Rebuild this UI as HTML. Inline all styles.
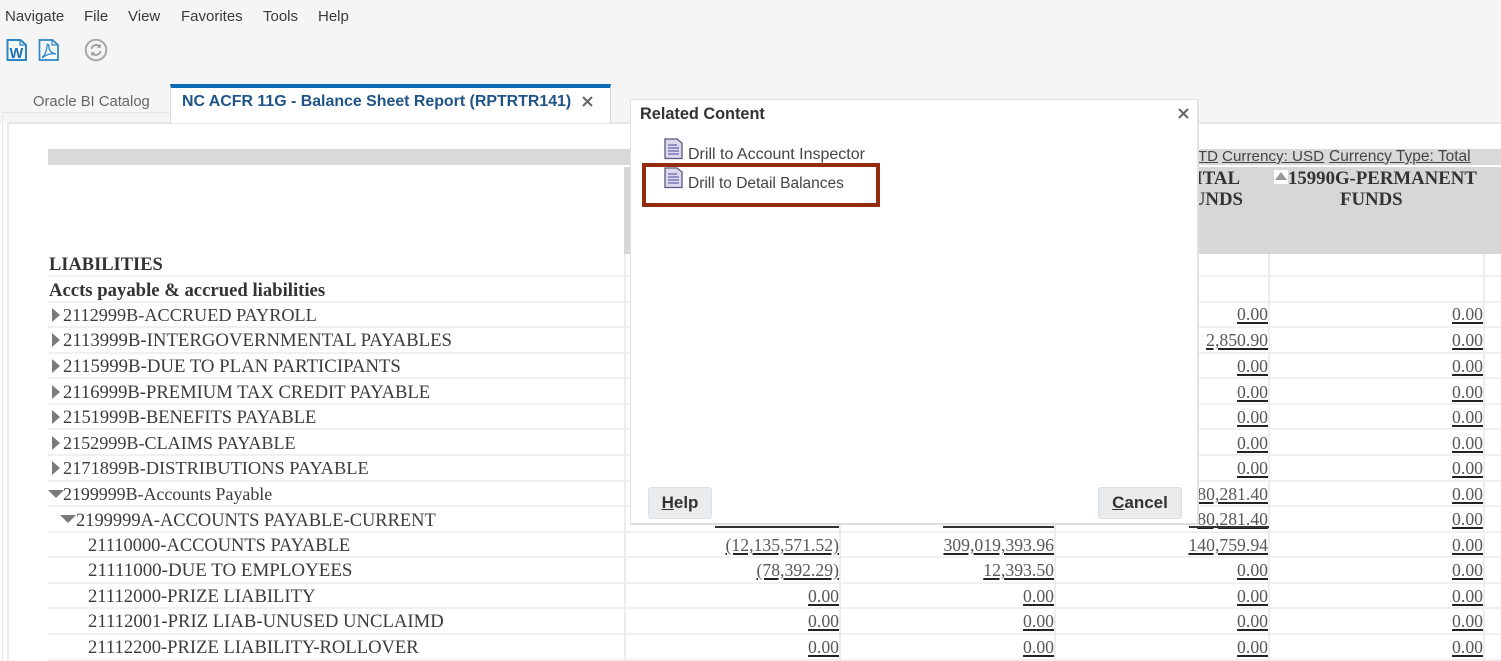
<!DOCTYPE html>
<html><head><meta charset="utf-8"><style>
html,body{margin:0;padding:0}
body{width:1501px;height:661px;position:relative;overflow:hidden;background:#f5f5f5;font-family:"Liberation Sans",sans-serif;color:#333}
div,svg{position:absolute}
.t{position:absolute;white-space:nowrap;line-height:20px}
.m{top:7px;font-size:15px;color:#3a3a3a}
.r{font-family:"Liberation Serif",serif;font-size:18.45px;color:#3b3b3b;height:20px}
.n{font-family:"Liberation Serif",serif;font-size:17.7px;color:#585858;text-decoration:underline;text-decoration-color:#222;text-decoration-thickness:2px;text-underline-offset:2px;text-align:right}
.h{left:48px;width:1453px;height:2px;background:#f0f0f0}
.v{top:254px;width:2px;height:407px;background:#ededed}
.ar{width:0;height:0;border-top:7px solid transparent;border-bottom:7px solid transparent;border-left:8px solid #7a7a7a}
.ad{width:0;height:0;border-left:8px solid transparent;border-right:8px solid transparent;border-top:8px solid #7a7a7a}
.b{background:#e9ebec;border:1px solid #dcdfe1;border-radius:3px;font-weight:bold;font-size:17px;color:#333;text-align:center;line-height:29px}
.hd{font-family:"Liberation Serif",serif;font-weight:bold;font-size:18.8px;color:#333}
.cu{top:147px;color:#444;text-decoration:underline}
</style></head><body>
<span class="t m" style="left:5px">Navigate</span>
<span class="t m" style="left:84px">File</span>
<span class="t m" style="left:128px">View</span>
<span class="t m" style="left:181px">Favorites</span>
<span class="t m" style="left:263px">Tools</span>
<span class="t m" style="left:318px">Help</span>

<svg style="left:6px;top:38px" width="22" height="24" viewBox="0 0 22 24"><path d="M1.5 2h13l5.5 5v15H1.500z" fill="#f4f8fb" stroke="#2f86c4" stroke-width="2"/><path d="M14 2v5h6" fill="none" stroke="#2f86c4" stroke-width="1.300"/><text x="3.500" y="20" font-family="Liberation Sans" font-weight="bold" font-size="14.500" fill="#1f6fb0">W</text></svg>
<svg style="left:38px;top:38px" width="22" height="24" viewBox="0 0 22 24"><path d="M1.5 2h13l5.5 5v15H1.500z" fill="#f6f9fb" stroke="#2f86c4" stroke-width="1.700"/><path d="M14 2v5h6" fill="none" stroke="#2f86c4" stroke-width="1.200"/><path d="M4 20c3-3 5-8 5-12 0-3 2-2 2 1 0 4 3 6 7 7-4-1-9 0-14 4z" fill="none" stroke="#2f86c4" stroke-width="1.300"/></svg>
<svg style="left:84px;top:38px" width="24" height="24" viewBox="0 0 24 24"><circle cx="12" cy="12" r="10.300" fill="#f3f3f3" stroke="#a8a8a8" stroke-width="2"/><path d="M7.500 11a4.700 4.700 0 0 1 8-2.500M16.500 13a4.700 4.700 0 0 1-8 2.500" fill="none" stroke="#999" stroke-width="1.700"/><path d="M16.800 5.800v4h-4zM7.200 18.200v-4h4z" fill="#999"/></svg>

<div style="left:0;top:123px;width:1501px;height:538px;background:#fff"></div>
<div style="left:0;top:112px;width:1501px;height:11px;background:#f5f5f5"></div>
<div style="left:2px;top:112px;width:168px;height:1px;background:#e4e4e4"></div>
<div style="left:7px;top:122px;width:1494px;height:2px;background:#e6e6e6"></div>
<div style="left:2px;top:112px;width:1px;height:549px;background:#e6e6e6"></div>
<div style="left:7px;top:122px;width:2px;height:539px;background:#ebebeb"></div>
<span class="t" style="left:33px;top:92px;font-size:14.800px;color:#666">Oracle BI Catalog</span>
<div style="left:170px;top:84px;width:441px;height:39px;background:#fff;border-right:1px solid #d4d4d4;border-left:1px solid #ddd;box-sizing:border-box;border-top:4px solid #0a6bb3"></div>
<span class="t" style="left:182px;top:92px;font-size:15.920px;font-weight:bold;color:#1f5488">NC ACFR 11G - Balance Sheet Report (RPTRTR141)</span>
<svg style="left:581px;top:95px" width="13" height="13" viewBox="0 0 13 13"><path d="M2 2l9 9M11 2l-9 9" stroke="#666" stroke-width="2"/></svg>

<div style="left:48px;top:149px;width:1453px;height:16px;background:#d9d9d9"></div>
<div style="left:48px;top:167px;width:577px;height:87px;background:#fff"></div>
<div style="left:625px;top:167px;width:876px;height:87px;background:#d7d7d7"></div>
<div style="left:624px;top:167px;width:7px;height:87px;background:#d7d7d7"></div>
<span class="t cu" style="left:1198px;font-size:15px">TD</span>
<span class="t cu" style="left:1222px;font-size:15.200px">Currency: USD</span>
<span class="t cu" style="left:1329px;font-size:15.500px">Currency Type: Total</span>
<span class="t hd" style="right:261px;top:169px">ITAL</span>
<span class="t hd" style="right:258px;top:190px">UNDS</span>
<div style="left:1274px;top:170px;width:14px;height:14px;background:#fff"></div>
<div style="left:1275px;top:172px;width:0;height:0;border-left:6.500px solid transparent;border-right:6.500px solid transparent;border-bottom:8px solid #999"></div>
<span class="t hd" style="left:1288px;top:169px">15990G-PERMANENT</span>
<span class="t hd" style="left:1340px;top:190px">FUNDS</span>

<div class="h" style="top:275px"></div><div class="h" style="top:301px"></div><div class="h" style="top:326px"></div><div class="h" style="top:352px"></div><div class="h" style="top:377px"></div><div class="h" style="top:403px"></div><div class="h" style="top:428px"></div><div class="h" style="top:454px"></div><div class="h" style="top:480px"></div><div class="h" style="top:505px"></div><div class="h" style="top:531px"></div><div class="h" style="top:556px"></div><div class="h" style="top:582px"></div><div class="h" style="top:607px"></div><div class="h" style="top:633px"></div><div class="h" style="top:659px"></div>
<div class="v" style="left:624px"></div><div class="v" style="left:839px"></div><div class="v" style="left:1054px"></div><div class="v" style="left:1268px"></div><div class="v" style="left:1483px"></div>

<span class="t r" style="left:49px;top:254px;font-weight:bold;color:#333">LIABILITIES</span>
<span class="t r" style="left:49px;top:281px;font-weight:bold;font-size:18.700px;color:#333">Accts payable &amp; accrued liabilities</span>
<div class="ar" style="left:52px;top:308px"></div><span class="t r" style="left:63px;top:305px;font-size:18.240px">2112999B-ACCRUED PAYROLL</span>
<div class="ar" style="left:52px;top:333px"></div><span class="t r" style="left:63px;top:331px;font-size:18.750px">2113999B-INTERGOVERNMENTAL PAYABLES</span>
<div class="ar" style="left:52px;top:359px"></div><span class="t r" style="left:63px;top:357px;font-size:18.800px">2115999B-DUE TO PLAN PARTICIPANTS</span>
<div class="ar" style="left:52px;top:385px"></div><span class="t r" style="left:63px;top:383px;font-size:18.600px">2116999B-PREMIUM TAX CREDIT PAYABLE</span>
<div class="ar" style="left:52px;top:410px"></div><span class="t r" style="left:63px;top:407px;font-size:18.450px">2151999B-BENEFITS PAYABLE</span>
<div class="ar" style="left:52px;top:436px"></div><span class="t r" style="left:63px;top:433px;font-size:18.130px">2152999B-CLAIMS PAYABLE</span>
<div class="ar" style="left:52px;top:461px"></div><span class="t r" style="left:63px;top:458px;font-size:18.400px">2171899B-DISTRIBUTIONS PAYABLE</span>
<div class="ad" style="left:48px;top:490px"></div><span class="t r" style="left:63px;top:484px;font-size:17.900px">2199999B-Accounts Payable</span>
<div class="ad" style="left:60px;top:515px"></div><span class="t r" style="left:76px;top:510px;font-size:18.450px">2199999A-ACCOUNTS PAYABLE-CURRENT</span>
<span class="t r" style="left:88px;top:535px;font-size:18.450px">21110000-ACCOUNTS PAYABLE</span>
<span class="t r" style="left:88px;top:561px;font-size:18.950px">21111000-DUE TO EMPLOYEES</span>
<span class="t r" style="left:88px;top:587px;font-size:18.600px">21112000-PRIZE LIABILITY</span>
<span class="t r" style="left:88px;top:612px;font-size:18.700px">21112001-PRIZ LIAB-UNUSED UNCLAIMD</span>
<span class="t r" style="left:88px;top:638px;font-size:18.600px">21112200-PRIZE LIABILITY-ROLLOVER</span>

<span class="t n" style="right:662px;top:535px">(12,135,571.52)</span>
<span class="t n" style="right:662px;top:560px">(78,392.29)</span>
<span class="t n" style="right:662px;top:586px">0.00</span>
<span class="t n" style="right:662px;top:611px">0.00</span>
<span class="t n" style="right:662px;top:637px">0.00</span>
<span class="t n" style="right:447px;top:535px">309,019,393.96</span>
<span class="t n" style="right:447px;top:560px">12,393.50</span>
<span class="t n" style="right:447px;top:586px">0.00</span>
<span class="t n" style="right:447px;top:611px">0.00</span>
<span class="t n" style="right:447px;top:637px">0.00</span>

<span class="t n" style="right:233px;top:304px">0.00</span>
<span class="t n" style="right:233px;top:330px">2,850.90</span>
<span class="t n" style="right:233px;top:356px">0.00</span>
<span class="t n" style="right:233px;top:382px">0.00</span>
<span class="t n" style="right:233px;top:407px">0.00</span>
<span class="t n" style="right:233px;top:433px">0.00</span>
<span class="t n" style="right:233px;top:458px">0.00</span>
<span class="t n" style="right:233px;top:484px">80,281.40</span>
<span class="t n" style="right:233px;top:509px">80,281.40</span>
<span class="t n" style="right:233px;top:535px">140,759.94</span>
<span class="t n" style="right:233px;top:560px">0.00</span>
<span class="t n" style="right:233px;top:586px">0.00</span>
<span class="t n" style="right:233px;top:611px">0.00</span>
<span class="t n" style="right:233px;top:637px">0.00</span>

<span class="t n" style="right:18px;top:304px">0.00</span>
<span class="t n" style="right:18px;top:330px">0.00</span>
<span class="t n" style="right:18px;top:356px">0.00</span>
<span class="t n" style="right:18px;top:382px">0.00</span>
<span class="t n" style="right:18px;top:407px">0.00</span>
<span class="t n" style="right:18px;top:433px">0.00</span>
<span class="t n" style="right:18px;top:458px">0.00</span>
<span class="t n" style="right:18px;top:484px">0.00</span>
<span class="t n" style="right:18px;top:509px">0.00</span>
<span class="t n" style="right:18px;top:535px">0.00</span>
<span class="t n" style="right:18px;top:560px">0.00</span>
<span class="t n" style="right:18px;top:586px">0.00</span>
<span class="t n" style="right:18px;top:611px">0.00</span>
<span class="t n" style="right:18px;top:637px">0.00</span>

<div style="left:715px;top:526px;width:124px;height:2px;background:#333"></div>
<div style="left:943px;top:526px;width:111px;height:2px;background:#333"></div>
<div style="left:1189px;top:526px;width:80px;height:2px;background:#333"></div>

<div style="left:630px;top:99px;width:569px;height:426px;background:#fff;border:1px solid #e0e0e0;box-sizing:border-box;border-bottom:2px solid #ddd;border-right:2px solid #e2e2e2"></div>
<span class="t" style="left:640px;top:104px;font-size:16.300px;font-weight:bold;color:#333">Related Content</span>
<svg style="left:1177px;top:107px" width="13" height="13" viewBox="0 0 13 13"><path d="M2 2l9 9M11 2l-9 9" stroke="#666" stroke-width="2"/></svg>
<svg style="left:664px;top:138px" width="19" height="22" viewBox="0 0 19 22"><path d="M1 1h12l5 4v15.500H1z" fill="#dcd9ef" stroke="#5a5878" stroke-width="1.300"/><path d="M4 7h9M4 10h11M4 13h11M4 16h11" stroke="#7d78b5" stroke-width="1.400"/></svg>
<svg style="left:664px;top:167px" width="19" height="22" viewBox="0 0 19 22"><path d="M1 1h12l5 4v15.500H1z" fill="#dcd9ef" stroke="#5a5878" stroke-width="1.300"/><path d="M4 7h9M4 10h11M4 13h11M4 16h11" stroke="#7d78b5" stroke-width="1.400"/></svg>
<span class="t" style="left:688px;top:145px;font-size:16px;color:#444">Drill to Account Inspector</span>
<span class="t" style="left:688px;top:174px;font-size:15.500px;color:#444">Drill to Detail Balances</span>
<div style="left:642px;top:163px;width:238px;height:44px;box-sizing:border-box;border:4px solid #952c0d"></div>
<div class="b" style="left:648px;top:487px;width:64px;height:32px;box-sizing:border-box"><u>H</u>elp</div>
<div class="b" style="left:1098px;top:487px;width:84px;height:32px;box-sizing:border-box"><u>C</u>ancel</div>
</body></html>
